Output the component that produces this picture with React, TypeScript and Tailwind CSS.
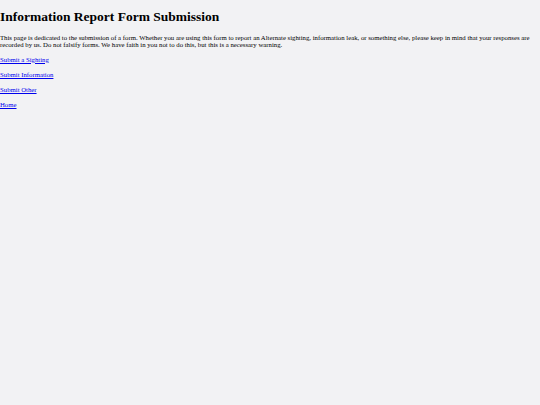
export default function App() {
  const p = "mt-[7px] mb-0 text-[6.75px] leading-[8px]";
  return (
    <div className="min-h-screen bg-[#f2f2f4] text-black flow-root" style={{ fontFamily: '"Liberation Serif", "Times New Roman", serif' }}>
      <h1 className="mt-[9.05px] mb-0 text-[13.5px] font-bold leading-[15.5px]">Information Report Form Submission</h1>
      <p className="mt-[9.05px] mb-0 text-[6.75px] leading-[7.76px]">
        This page is dedicated to the submission of a form. Whether you are using this form to report an Alternate sighting, information leak, or something else, please keep in mind that your responses are recorded by us. Do not falsify forms. We have faith in you not to do this, but this is a necessary warning.
      </p>
      <p className="mt-[6.5px] mb-0 text-[6.75px] leading-[8px]"><a href="#" className="text-[#0000ee] underline">Submit a Sighting</a></p>
      <p className={p}><a href="#" className="text-[#0000ee] underline">Submit Information</a></p>
      <p className={p}><a href="#" className="text-[#0000ee] underline">Submit Other</a></p>
      <p className={p}><a href="#" className="text-[#0000ee] underline">Home</a></p>
    </div>
  );
}
